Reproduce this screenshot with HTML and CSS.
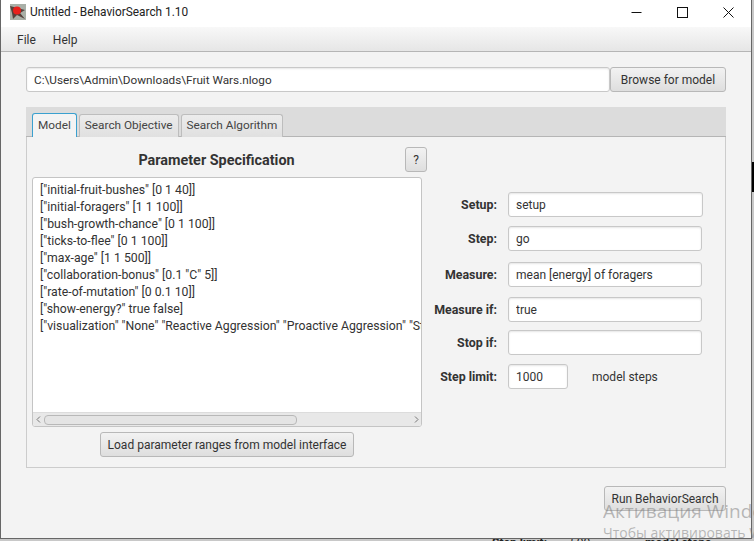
FILE: index.html
```html
<!DOCTYPE html>
<html lang="en">
<head>
    <meta charset="UTF-8">
    <title>Untitled - BehaviorSearch 1.10</title>
    <link rel="stylesheet" href="styles.css">
</head>
<body>
    <div class="window">
        <div class="titlebar">
            <svg class="app-icon" width="16" height="16" viewBox="0 0 16 16">
                <rect x="0" y="0" width="16" height="16" fill="#a9b0a8"/>
                <path d="M0 2 L15 6 L10 9 L15 15 L7 11 L3 15 L2 9 Z" fill="#54413c"/>
                <circle cx="7" cy="6.5" r="4" fill="#e8201c"/>
            </svg>
            <span class="title-text">Untitled - BehaviorSearch 1.10</span>
            <div class="win-controls">
                <svg width="11" height="11" viewBox="0 0 11 11"><path d="M0.5 5.5H10.5" stroke="#111" fill="none"/></svg>
                <svg width="11" height="11" viewBox="0 0 11 11"><rect x="0.5" y="0.5" width="10" height="10" stroke="#111" fill="none"/></svg>
                <svg width="11" height="11" viewBox="0 0 11 11"><path d="M0.5 0.5L10.5 10.5M10.5 0.5L0.5 10.5" stroke="#111" fill="none"/></svg>
            </div>
        </div>
        <div class="menubar">
            <span>File</span>
            <span>Help</span>
        </div>
        <div class="content">
            <div class="model-row">
                <input class="field model-path" type="text" value="C:\Users\Admin\Downloads\Fruit Wars.nlogo">
                <button class="btn browse-btn">Browse for model</button>
            </div>
            <div class="tabpane">
                <div class="tabs">
                    <div class="tab active">Model</div>
                    <div class="tab">Search Objective</div>
                    <div class="tab">Search Algorithm</div>
                </div>
                <div class="tab-body">
                    <div class="left-col">
                        <div class="spec-head">
                            <h2>Parameter Specification</h2>
                            <button class="btn help-btn">?</button>
                        </div>
                        <div class="spec-box">
                            <div class="spec-text">
                                <div>["initial-fruit-bushes" [0 1 40]]</div>
                                <div>["initial-foragers" [1 1 100]]</div>
                                <div>["bush-growth-chance" [0 1 100]]</div>
                                <div>["ticks-to-flee" [0 1 100]]</div>
                                <div>["max-age" [1 1 500]]</div>
                                <div>["collaboration-bonus" [0.1 "C" 5]]</div>
                                <div>["rate-of-mutation" [0 0.1 10]]</div>
                                <div>["show-energy?" true false]</div>
                                <div>["visualization" "None" "Reactive Aggression" "Proactive Aggression" "Strategic"]</div>
                            </div>
                            <div class="hscroll">
                                <svg width="5" height="7" viewBox="0 0 5 7"><path d="M4 0.5L1 3.5L4 6.5" stroke="#777" fill="none"/></svg>
                                <div class="track"><div class="thumb"></div></div>
                                <svg width="5" height="7" viewBox="0 0 5 7"><path d="M1 0.5L4 3.5L1 6.5" stroke="#777" fill="none"/></svg>
                            </div>
                        </div>
                        <button class="btn load-btn">Load parameter ranges from model interface</button>
                    </div>
                    <div class="right-col">
                        <div class="form-row">
                            <label>Setup:</label>
                            <input class="field wide" type="text" value="setup">
                        </div>
                        <div class="form-row">
                            <label>Step:</label>
                            <input class="field" type="text" value="go">
                        </div>
                        <div class="form-row gap-big">
                            <label>Measure:</label>
                            <input class="field" type="text" value="mean [energy] of foragers">
                        </div>
                        <div class="form-row gap-mid">
                            <label>Measure if:</label>
                            <input class="field" type="text" value="true">
                        </div>
                        <div class="form-row gap-small">
                            <label>Stop if:</label>
                            <input class="field" type="text" value="">
                        </div>
                        <div class="form-row">
                            <label>Step limit:</label>
                            <input class="field short" type="text" value="1000">
                            <span class="steps-note">model steps</span>
                        </div>
                    </div>
                </div>
            </div>
            <div class="run-row">
                <button class="btn run-btn">Run BehaviorSearch</button>
            </div>
        </div>
    </div>
    <div class="behind-text">
        <span class="behind-label">Step limit:</span>
        <span class="behind-value">500</span>
        <span class="behind-note">model steps</span>
    </div>
    <div class="activate">
        <div class="activate-big">Активация Windows</div>
        <div class="activate-small">Чтобы активировать Windows</div>
    </div>
</body>
</html>
```

FILE: styles.css
```css
html, body {
    margin: 0;
    padding: 0;
    height: 100%;
    overflow: hidden;
}
body {
    position: relative;
    width: 754px;
    height: 541px;
    background: linear-gradient(#c8c8c8 162px, #000 162px, #000 192px, #c8c8c8 192px);
    font-family: Roboto, "Open Sans", sans-serif;
    font-size: 12px;
    color: #333;
}
.window {
    width: 752px;
    height: 539px;
    box-sizing: border-box;
    border-left: 1px solid #666;
    border-right: 1px solid #666;
    border-bottom: 1px solid #666;
    background: #f3f3f3;
    display: flex;
    flex-direction: column;
}
.titlebar {
    height: 27px;
    box-sizing: border-box;
    background: #fff;
    display: flex;
    align-items: center;
    padding: 0 0 3px 9px;
    color: #222;
}
.app-icon { margin-right: 4px; }
.title-text { font-size: 11.85px; }
.win-controls {
    margin-left: auto;
    display: flex;
    gap: 35px;
    padding-right: 17px;
}
.menubar {
    height: 25px;
    box-sizing: border-box;
    background: linear-gradient(#f8f8f8, #e6e6e6);
    border-bottom: 1px solid #b5b5b5;
    display: flex;
    gap: 17px;
    align-items: center;
    padding: 1px 0 0 16px;
}
.content {
    padding: 15px 25px 0 25px;
    flex: 1;
}
.model-row {
    display: flex;
    height: 25px;
}
.field {
    box-sizing: border-box;
    height: 25px;
    border: 1px solid #c8c8c8;
    border-radius: 3px;
    background: #fff;
    box-shadow: inset 0 1px 2px #e6e6e6;
    padding: 0 7px;
    font: inherit;
    color: #333;
    outline: none;
    width: 194px;
}
.field.wide { width: 195px; }
.field.short { width: 60px; }
.field.model-path { width: 584px; font-size: 11.75px; }
.btn {
    box-sizing: border-box;
    height: 25px;
    border: 1px solid #b8b8b8;
    border-radius: 3px;
    background: linear-gradient(#f2f2f2, #dedede);
    font: inherit;
    color: #333;
    padding: 0;
    white-space: nowrap;
}
.browse-btn { width: 116px; }
.tabpane {
    margin-top: 15px;
    width: 700px;
    height: 361px;
    box-sizing: border-box;
    display: flex;
    flex-direction: column;
}
.tabs {
    height: 30px;
    box-sizing: border-box;
    background: #dcdcdc;
    border-bottom: 1px solid #b5b5b5;
    display: flex;
    align-items: flex-end;
    gap: 2px;
    padding-left: 6px;
}
.tab {
    height: 23px;
    box-sizing: border-box;
    padding: 0 5px;
    font-size: 11.8px;
    line-height: 21px;
    background: linear-gradient(#ececec, #e0e0e0);
    border: 1px solid #bdbdbd;
    border-bottom: none;
    border-radius: 3px 3px 0 0;
    margin-bottom: -1px;
    color: #444;
}
.tab.active {
    background: #f3f3f3;
    border-color: #3aa0cf;
    border-bottom: none;
    height: 24px;
    line-height: 23px;
}
.tab-body {
    flex: 1;
    box-sizing: border-box;
    border: 1px solid #ccc;
    border-top: none;
    display: flex;
    padding: 10px 5px 10px 5px;
}
.left-col {
    width: 395px;
    display: flex;
    flex-direction: column;
    align-items: flex-start;
}
.spec-head {
    width: 395px;
    height: 25px;
    position: relative;
    display: flex;
    justify-content: center;
    align-items: center;
    margin-bottom: 5px;
}
.spec-head h2 {
    margin: 2px 26px 0 0;
    font-size: 14.4px;
    font-weight: 700;
    color: #333;
}
.help-btn {
    position: absolute;
    right: 0;
    top: 0;
    width: 22px;
}
.spec-box {
    width: 390px;
    height: 250px;
    box-sizing: border-box;
    border: 1px solid #c4c4c4;
    border-radius: 3px;
    background: #fff;
    display: flex;
    flex-direction: column;
    overflow: hidden;
}
.spec-text {
    flex: 1;
    padding: 4px 7px 2px;
    font-size: 12.25px;
    line-height: 17px;
    white-space: nowrap;
    overflow: hidden;
}
.hscroll {
    height: 13px;
    background: #e8e8e8;
    border-top: 1px solid #dcdcdc;
    display: flex;
    align-items: center;
    padding: 0 2px 0 3px;
    gap: 3px;
}
.track { flex: 1; }
.thumb {
    width: 251px;
    height: 8px;
    border: 1px solid #b8b8b8;
    border-radius: 4px;
    background: #e4e4e4;
}
.load-btn {
    width: 254px;
    margin: 5px 0 0 68px;
}
.right-col {
    padding: 45px 0 0 2px;
    display: flex;
    flex-direction: column;
    gap: 9px;
}
.form-row {
    display: flex;
    align-items: center;
    height: 25px;
}
.form-row label {
    width: 68px;
    margin-right: 11px;
    text-align: right;
    font-size: 12.4px;
    font-weight: 700;
}
.gap-big { margin-top: 2px; }
.gap-mid { margin-top: 1px; }
.gap-small { margin-top: -1px; }
.steps-note { margin-left: 24px; }
.run-row {
    display: flex;
    justify-content: flex-end;
    margin-top: 18px;
    width: 700px;
}
.run-btn { width: 122px; }
.behind-text {
    position: absolute;
    left: 492px;
    top: 539px;
    width: 240px;
    height: 2px;
    overflow: hidden;
    display: flex;
    line-height: 8px;
    font-weight: 700;
    color: #222;
}
.behind-label { width: 78px; }
.behind-value { width: 75px; font-weight: 400; }
.activate {
    position: absolute;
    left: 603px;
    top: 499px;
    width: 151px;
    height: 42px;
    overflow: hidden;
    white-space: nowrap;
    font-family: "Open Sans", sans-serif;
    color: rgba(120, 120, 120, 0.5);
}
.activate-big { font-size: 19px; line-height: 24px; }
.activate-small { font-size: 14px; line-height: 18px; margin-top: 1px; }
```
